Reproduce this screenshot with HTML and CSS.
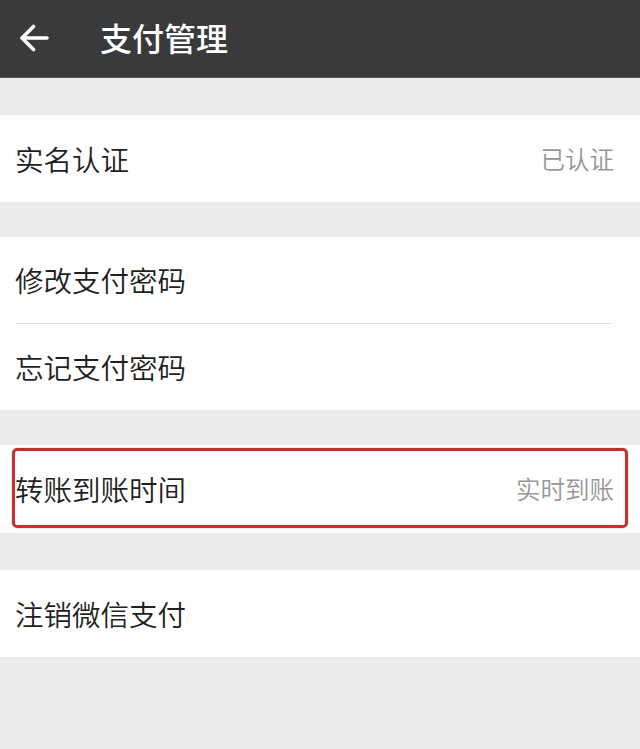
FILE: index.html
```html
<!DOCTYPE html>
<html lang="zh-CN">
<head>
<meta charset="utf-8">
<title>支付管理</title>
<link rel="stylesheet" href="styles.css">
</head>
<body>
  <header class="topbar">
    <svg class="back" viewBox="0 0 30 28" width="30" height="28" aria-hidden="true">
      <path d="M28 14H3M14.5 2.5L3 14l11.5 11.5" fill="none" stroke="#fff" stroke-width="3.6" stroke-linecap="round" stroke-linejoin="round"/>
    </svg>
    <h1 class="title">支付管理</h1>
  </header>
  <main class="content">
    <section class="group">
      <div class="row"><span class="label">实名认证</span><span class="value">已认证</span></div>
    </section>
    <section class="group">
      <div class="row"><span class="label">修改支付密码</span></div>
      <div class="divider"></div>
      <div class="row"><span class="label">忘记支付密码</span></div>
    </section>
    <section class="group group-tall">
      <div class="row row-marked"><span class="label">转账到账时间</span><span class="value">实时到账</span></div>
    </section>
    <section class="group group-last">
      <div class="row"><span class="label">注销微信支付</span></div>
    </section>
  </main>
</body>
</html>
```
FILE: styles.css
```css
html, body {
  margin: 0;
  padding: 0;
}
body {
  width: 640px;
  height: 749px;
  background: #ebebeb;
  font-family: "Noto Sans CJK SC", "Noto Sans", sans-serif;
  overflow: hidden;
}
.topbar {
  height: 77px;
  background: #393a3c;
  border-bottom: 1px solid #55575a;
  display: flex;
  align-items: center;
  padding-left: 19px;
  box-sizing: content-box;
}
.back {
  display: block;
  margin-top: -2px;
}
.title {
  margin: 0 0 0 51px;
  color: #ffffff;
  font-size: 32px;
  font-weight: 500;
  line-height: 1;
  margin-top: -4px;
}
.content {
  padding-top: 37px;
  display: flex;
  flex-direction: column;
  gap: 35px;
}
.group {
  background: #fefefe;
}
.group-tall .row {
  height: 88px;
}
.group-last {
  margin-top: 2px;
}
.row {
  height: 87px;
  display: flex;
  align-items: center;
  justify-content: space-between;
  padding: 0 26px 0 15px;
  position: relative;
}
.group .row:first-child:nth-last-child(3),
.group .row:last-child:nth-child(3) {
  height: 86px;
}
.label {
  font-size: 28.5px;
  font-weight: 350;
  color: #1f1f1f;
  line-height: 1;
  margin-top: 1px;
}
.value {
  font-size: 24.5px;
  font-weight: 350;
  color: #979797;
  line-height: 1;
  margin-top: 1px;
}
.divider {
  height: 1px;
  background: #e3e3e3;
  margin-left: 16px;
  margin-right: 28px;
}
.row-marked::after {
  content: "";
  position: absolute;
  left: 12px;
  right: 12px;
  top: 3px;
  bottom: 5px;
  border: 3.5px solid #c4302c;
  border-radius: 5px;
  box-shadow: 0 0 2px rgba(196, 48, 44, 0.35);
}
```
